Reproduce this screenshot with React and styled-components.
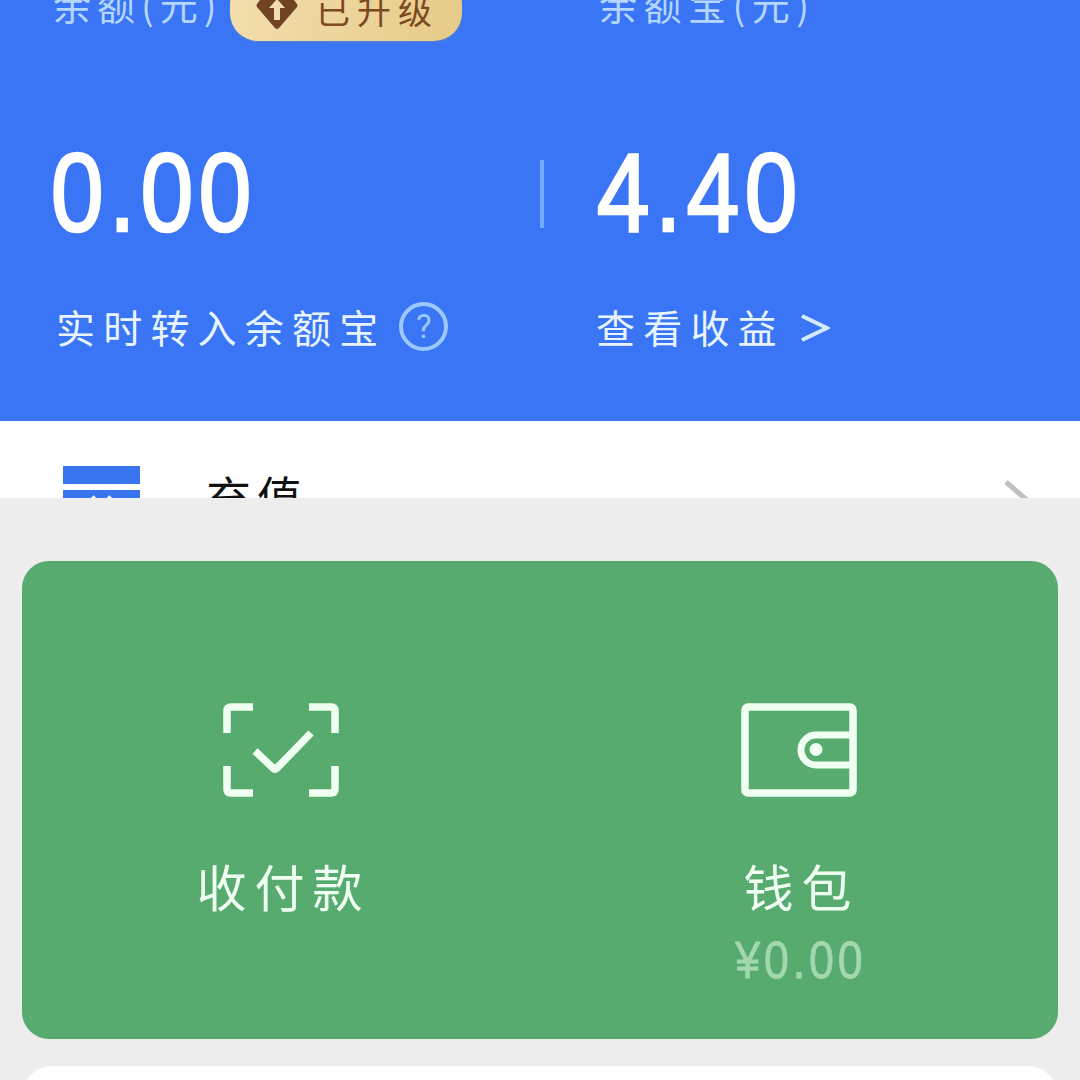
import React from "react";
import styled, { createGlobalStyle } from "styled-components";

const GlobalStyle = createGlobalStyle`
  * {
    box-sizing: border-box;
  }

  body {
    margin: 0;
    background: #ededed;
    font-family: "Liberation Sans", "Noto Sans CJK SC", sans-serif;
  }
`;

const Screen = styled.div`
  width: 1080px;
  height: 1080px;
  overflow: hidden;
  background: #ededed;
`;

const BalancePanel = styled.section`
  display: flex;
  height: 421px;
  overflow: hidden;
  background: #3975f5;
`;

const Account = styled.div`
  width: ${(props) => props.$width};
  padding-left: ${(props) => props.$indent};
`;

const AccountHeader = styled.div`
  display: flex;
  align-items: flex-end;
  height: 41px;
`;

const AccountName = styled.span`
  padding: 0 0 15px 3px;
  width: ${(props) => props.$width};
  color: #b4d6ff;
  font-family: "Noto Sans CJK SC", sans-serif;
  font-size: 38px;
  font-weight: 400;
  line-height: 44px;
  letter-spacing: ${(props) => props.$spacing};
  white-space: nowrap;
`;

const UpgradeBadge = styled.span`
  display: flex;
  align-items: flex-end;
  flex-shrink: 0;
  width: 232px;
  height: 64px;
  padding: 0 0 11px 26px;
  border-radius: 28px;
  background: linear-gradient(100deg, #f3dfae, #e6ca87);
  box-shadow: 0 1px 2px #5d82ca;
`;

const BadgeText = styled.span`
  margin-left: 18px;
  padding-bottom: 1px;
  color: #7b4a22;
  font-family: "Noto Sans CJK SC", sans-serif;
  font-size: 34px;
  line-height: 38px;
  letter-spacing: 7px;
  white-space: nowrap;
`;

const Amount = styled.div`
  margin-top: 84px;
  height: 134px;
  padding-left: 1px;
  color: #fff;
  font-size: 112px;
  line-height: 135px;
  letter-spacing: 6px;
  transform: scaleX(0.85);
  transform-origin: left;
  -webkit-text-stroke: 2.6px #fff;
`;

const AccountNote = styled.div`
  display: flex;
  align-items: center;
  height: 50px;
  margin-top: 42px;
  padding-left: ${(props) => props.$indent || "0"};
  color: #e8f4ff;
  font-family: "Noto Sans CJK SC", sans-serif;
  font-size: 39px;
  font-weight: 400;
  letter-spacing: 8.2px;
  white-space: nowrap;

  svg {
    flex-shrink: 0;
    margin-top: 3px;
    margin-left: ${(props) => props.$iconGap};
  }
`;

const Divider = styled.div`
  width: 4px;
  height: 68px;
  margin-top: 160px;
  background: #75acff;
`;

const HelpIcon = styled.span`
  display: flex;
  align-items: center;
  justify-content: center;
  width: 49px;
  height: 49px;
  margin-left: 13px;
  border: 4px solid #9cc8ff;
  border-radius: 50%;
  color: #9cc8ff;
  font-family: Roboto, sans-serif;
  font-size: 33px;
  font-weight: 400;
  letter-spacing: 0;
  line-height: 1;
`;

const RechargeRow = styled.div`
  display: flex;
  align-items: flex-start;
  height: 77px;
  padding-left: 63px;
  overflow: hidden;
  background: #fff;
`;

const CardIcon = styled.svg`
  flex-shrink: 0;
  margin-top: 45px;
`;

const RechargeText = styled.span`
  flex: 1;
  margin: 50px 0 0 66px;
  color: #111;
  font-family: "Noto Sans CJK SC", sans-serif;
  font-size: 45px;
  line-height: 50px;
  letter-spacing: 6px;
`;

const RowArrow = styled.svg`
  flex-shrink: 0;
  margin: 58px 50px 0 0;
`;

const WalletCard = styled.section`
  display: flex;
  height: 478px;
  margin: 63px 22px 27px;
  border-radius: 27px;
  background: #58ab6f;
`;

const WalletEntry = styled.div`
  display: flex;
  flex: 1;
  flex-direction: column;
  align-items: center;
  padding-top: 142px;
  color: #effff2;
`;

const EntryName = styled.div`
  height: 60px;
  margin-top: 58px;
  padding-left: 5px;
  font-family: "Noto Sans CJK SC", sans-serif;
  font-size: 50px;
  font-weight: 400;
  line-height: 60px;
  letter-spacing: 8px;
`;

const EntryAmount = styled.div`
  height: 60px;
  margin-top: 15px;
  padding-left: 5px;
  color: #a2d8ae;
  font-size: 52px;
  line-height: 60px;
  letter-spacing: 4.5px;
  transform: scaleX(0.86);
  -webkit-text-stroke: 0.8px #a2d8ae;
`;

const NextCard = styled.section`
  height: 60px;
  margin: 0 22px;
  border-radius: 30px 30px 0 0;
  background: #fff;
`;

function DiamondIcon() {
  return (
    <svg width="42" height="42" viewBox="0 0 42 42">
      <path d="M12 3h18q2 0 3 2l8 11q1 2 0 3L23 40q-2 2-4 0L1 19q-1-1 0-3L9 5q1-2 3-2z" fill="#704322" />
      <path d="M21 11l-8 9h5v12h6V20h5z" fill="#f3dcb0" />
    </svg>
  );
}

function ScanIcon() {
  return (
    <svg width="116" height="94" viewBox="0 0 116 94" fill="none" stroke="#effff2" strokeWidth="7.5">
      <path d="M4 30V8q0-4 4-4h22M86 4h22q4 0 4 4v22M4 63v23q0 4 4 4h22M86 90h22q4 0 4-4V63" />
      <path d="M32 48L50 65Q52 67 54 65L88 30" />
    </svg>
  );
}

function WalletIcon() {
  return (
    <svg width="116" height="94" viewBox="0 0 116 94" fill="none" stroke="#effff2" strokeWidth="7.5">
      <rect x="4" y="4" width="108" height="86" rx="3" />
      <path d="M111 32H75a15 15 0 0 0 0 30h36" strokeWidth="7" />
      <circle cx="75" cy="46.5" r="6.5" fill="#effff2" stroke="none" />
    </svg>
  );
}

function App() {
  return (
    <Screen>
      <GlobalStyle />
      <BalancePanel>
        <Account $width="540px" $indent="50px">
          <AccountHeader>
            <AccountName $width="180px" $spacing="6px">余额(元)</AccountName>
            <UpgradeBadge>
              <DiamondIcon />
              <BadgeText>已升级</BadgeText>
            </UpgradeBadge>
          </AccountHeader>
          <Amount>0.00</Amount>
          <AccountNote $indent="6px">
            实时转入余额宝
            <HelpIcon>?</HelpIcon>
          </AccountNote>
        </Account>
        <Divider />
        <Account $width="536px" $indent="52px">
          <AccountHeader>
            <AccountName $width="250px" $spacing="6.5px">余额宝(元)</AccountName>
          </AccountHeader>
          <Amount>4.40</Amount>
          <AccountNote $iconGap="15px">
            查看收益
            <svg width="30" height="28" viewBox="0 0 30 28" fill="none" stroke="#d5eaff" strokeWidth="4">
              <path d="M2 2l25 12L2 26" />
            </svg>
          </AccountNote>
        </Account>
      </BalancePanel>
      <RechargeRow>
        <CardIcon width="77" height="60" viewBox="0 0 77 60">
          <path d="M0 0h77v18H0zM0 24h77v36H0z" fill="#3975f0" />
          <path d="M29 31l9.500 11 9.500-11" fill="none" stroke="#fff" strokeWidth="5" />
        </CardIcon>
        <RechargeText>充值</RechargeText>
        <RowArrow width="26" height="44" viewBox="0 0 26 44">
          <path d="M2 3l22 19L2 41" fill="none" stroke="#c0c0c0" strokeWidth="5" />
        </RowArrow>
      </RechargeRow>
      <WalletCard>
        <WalletEntry>
          <ScanIcon />
          <EntryName>收付款</EntryName>
        </WalletEntry>
        <WalletEntry>
          <WalletIcon />
          <EntryName>钱包</EntryName>
          <EntryAmount>¥0.00</EntryAmount>
        </WalletEntry>
      </WalletCard>
      <NextCard />
    </Screen>
  );
}

export default App;
